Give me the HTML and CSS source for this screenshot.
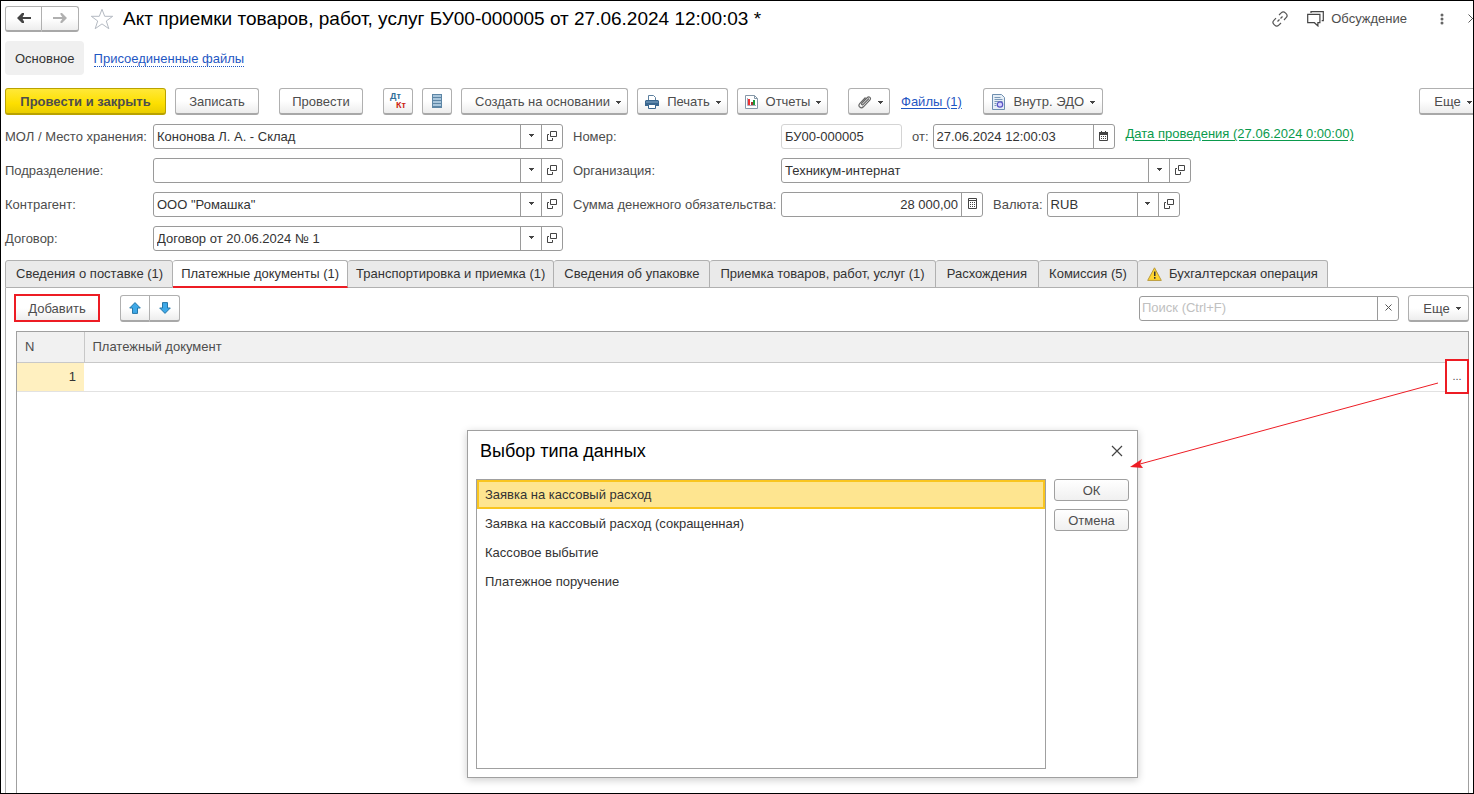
FILE: index.html
```
<!DOCTYPE html>
<html lang="ru">
<head>
<meta charset="utf-8">
<title>Акт приемки товаров, работ, услуг</title>
<link rel="stylesheet" href="styles.css">
</head>
<body>
<svg class="defs" width="0" height="0" aria-hidden="true">
  <symbol id="caret" viewBox="0 0 5 3"><path d="M0 0h5v1H4v1H3v1H2V2H1V1H0z" fill="#444"/></symbol>
  <symbol id="open" viewBox="0 0 10 10"><path d="M3.500.5h6v5h-6zM2 3.500H.5v6h5V7" fill="none" stroke="#444"/></symbol>
</svg>
<div class="app">
  <header class="titlebar">
    <div class="pair">
      <button class="btn" type="button" aria-label="Назад"><svg width="14" height="10" viewBox="0 0 14 10"><path d="M3 5h11" stroke="#444" stroke-width="2"/><path d="M0 5 5 0h2v1.500L5 5l2 3.500V10H5z" fill="#444"/></svg></button>
      <button class="btn" type="button" aria-label="Вперед"><svg width="14" height="10" viewBox="0 0 14 10"><path d="M0 5h11" stroke="#b0b0b0" stroke-width="2"/><path d="M14 5 9 0H7.500v1.500L10 5 7.500 8.500V10H9z" fill="#b0b0b0"/></svg></button>
    </div>
    <button class="plain star" type="button" aria-label="В избранное"><svg width="24" height="22" viewBox="0 0 24 22"><path d="M12 1.300l2.700 7h8l-6.400 4.700 2.500 7.700-6.800-4.800-6.800 4.800 2.500-7.700L1.300 8.300h8z" fill="#fff" stroke="#b4bac2"/></svg></button>
    <h1>Акт приемки товаров, работ, услуг БУ00-000005 от 27.06.2024 12:00:03 *</h1>
    <button class="plain link-icon" type="button" aria-label="Получить ссылку"><svg width="16" height="16" viewBox="0 0 16 16" fill="none" stroke="#555" stroke-width="1.200"><path d="M7 4l2.200-2.200a2.900 2.900 0 0 1 4.100 0l.8.800a2.900 2.900 0 0 1 0 4.100L12 9M9 12l-2.200 2.200a2.900 2.900 0 0 1-4.100 0l-.8-.8a2.900 2.900 0 0 1 0-4.100L4 7.200M5.500 10.500l2-2M8.500 7.500l2-2"/></svg></button>
    <button class="plain talk" type="button"><svg width="17" height="16" viewBox="0 0 17 16" fill="none" stroke="#444" stroke-width="1.200"><path d="M4 2V.6h12.300v9h-1.600M.7 3.300h12.200v8.400h-2v3.200l-3.500-3.200H.7z"/></svg>Обсуждение</button>
    <button class="plain dots" type="button" aria-label="Меню"><svg width="4" height="12" viewBox="0 0 4 12" fill="#666"><circle cx="2" cy="2" r="1.500"/><circle cx="2" cy="6" r="1.500"/><circle cx="2" cy="10" r="1.500"/></svg></button>
    <button class="plain shut" type="button" aria-label="Закрыть"><svg width="9" height="9" viewBox="0 0 9 9"><path d="M.5.500l8 8M8.500.500l-8 8" stroke="#555"/></svg></button>
  </header>

  <nav class="sections">
    <a class="current" href="#main">Основное</a>
    <a class="attached" href="#attached">Присоединенные файлы</a>
  </nav>

  <div class="toolbar">
    <button class="btn primary" type="button">Провести и закрыть</button>
    <button class="btn post gap-s" type="button">Записать</button>
    <button class="btn post gap-l" type="button">Провести</button>
    <button class="btn icon gap-l" type="button" aria-label="Дебет Кредит"><span class="dk"><b>Дт</b><b class="kt">Кт</b></span></button>
    <button class="btn icon gap-s" type="button" aria-label="Реестр"><svg width="10" height="14" viewBox="0 0 10 14"><path d="M0 0h10v14H0z" fill="#5d86a6"/><path d="M1 1h8v2H1zM1 4h8v2H1zM1 7h8v2H1zM1 10h8v2H1z" fill="#a9c6dc"/></svg></button>
    <button class="btn create gap-s" type="button">Создать на основании<svg class="caret"><use href="#caret"/></svg></button>
    <button class="btn lead w-print gap-s" type="button"><svg width="14" height="14" viewBox="0 0 14 14"><path d="M3.500 6V.5h5l2 2V6" fill="#fff" stroke="#5c7f9e"/><path d="M0 6l1-1h12l1 1v5H0z" fill="#3a678f"/><path d="M1 7h12" stroke="#86abc9"/><path d="M3.500 9.500h7v4h-7z" fill="#fff" stroke="#3a678f"/></svg>Печать<svg class="caret"><use href="#caret"/></svg></button>
    <button class="btn lead w-print gap-s" type="button"><svg width="13" height="14" viewBox="0 0 13 14"><path d="M.5.500h9l3 3v10H.5z" fill="#fff" stroke="#8598a8"/><path d="M9.500.500v3h3" fill="none" stroke="#8598a8"/><path d="M2.500 3v7.500H11" fill="none" stroke="#aab"/><path d="M3 4h2v6H3z" fill="#e33"/><path d="M6 7h2v3H6z" fill="#a33"/><path d="M8 5h2v5H8z" fill="#1a9c3b"/></svg>Отчеты<svg class="caret"><use href="#caret"/></svg></button>
    <button class="btn clip gap-l" type="button" aria-label="Вложения"><svg width="14" height="14" viewBox="0 0 14 14"><path d="M11 3.500 5 9.600c-.8.800-2-.3-1.200-1.200l5.600-5.900c1.700-1.700 4.200.5 2.600 2.300l-6.600 7c-2.500 2.400-5.900-.6-3.700-3.200L7.500 2.500" fill="none" stroke="#666" stroke-width="1.200"/></svg><svg class="caret"><use href="#caret"/></svg></button>
    <a class="files" href="#files">Файлы (1)</a>
    <button class="btn lead edo" type="button"><svg width="14" height="16" viewBox="0 0 14 16"><path d="M.5.500h9l3 3v12H.5z" fill="#e6eef6" stroke="#6f8fb0"/><path d="M2.500 3.500h6M2.500 5.500h8M2.500 7.500h8M2.500 9.500h2M2.500 11.500h2" stroke="#7a98b8"/><circle cx="8" cy="10.500" r="2.700" fill="#d8d5ff" stroke="#5a55c4" stroke-width="1.200"/></svg>Внутр. ЭДО<svg class="caret"><use href="#caret"/></svg></button>
    <button class="btn etc more" type="button">Еще<svg class="caret"><use href="#caret"/></svg></button>
  </div>

  <form class="form">
    <div class="fields left">
      <label for="mol">МОЛ / Место хранения:</label>
      <div class="field"><input id="mol" value="Кононова Л. А. - Склад"><button type="button" aria-label="Выбрать"><svg class="caret"><use href="#caret"/></svg></button><button type="button" aria-label="Открыть"><svg class="open"><use href="#open"/></svg></button></div>
      <label for="dep">Подразделение:</label>
      <div class="field"><input id="dep" value=""><button type="button" aria-label="Выбрать"><svg class="caret"><use href="#caret"/></svg></button><button type="button" aria-label="Открыть"><svg class="open"><use href="#open"/></svg></button></div>
      <label for="agent">Контрагент:</label>
      <div class="field"><input id="agent" value='ООО "Ромашка"'><button type="button" aria-label="Выбрать"><svg class="caret"><use href="#caret"/></svg></button><button type="button" aria-label="Открыть"><svg class="open"><use href="#open"/></svg></button></div>
      <label for="contract">Договор:</label>
      <div class="field"><input id="contract" value="Договор от 20.06.2024 № 1"><button type="button" aria-label="Выбрать"><svg class="caret"><use href="#caret"/></svg></button><button type="button" aria-label="Открыть"><svg class="open"><use href="#open"/></svg></button></div>
    </div>
    <div class="fields right">
      <label for="num">Номер:</label>
      <div class="line">
        <div class="field readonly w-num"><input id="num" value="БУ00-000005" readonly></div>
        <label class="inner" for="date">от:</label>
        <div class="field w-date"><input id="date" value="27.06.2024 12:00:03"><button type="button" aria-label="Календарь"><svg width="9" height="10" viewBox="0 0 9 10"><path d="M.5 2h8v7.500h-8z" fill="#fff" stroke="#444"/><path d="M0 1h9v3H0zM2 0h1v2H2zM6 0h1v2H6z" fill="#444"/><path d="M2 5.500h5M2 7.500h5" stroke="#444" stroke-dasharray="1 1"/></svg></button></div>
        <a class="posting" href="#posting">Дата проведения (27.06.2024 0:00:00)</a>
      </div>
      <label for="org">Организация:</label>
      <div class="field w-org"><input id="org" value="Техникум-интернат"><button type="button" aria-label="Выбрать"><svg class="caret"><use href="#caret"/></svg></button><button type="button" aria-label="Открыть"><svg class="open"><use href="#open"/></svg></button></div>
      <label for="sum">Сумма денежного обязательства:</label>
      <div class="line">
        <div class="field w-sum"><input id="sum" class="num" value="28 000,00"><button type="button" aria-label="Калькулятор"><svg width="9" height="11" viewBox="0 0 9 11"><path d="M.5.500h8v10h-8zM.5 2.500h8" fill="none" stroke="#444"/><path d="M2 4.500h5M2 6.500h5M2 8.500h5" stroke="#444" stroke-dasharray="1 1"/></svg></button></div>
        <label class="inner" for="cur">Валюта:</label>
        <div class="field w-cur"><input id="cur" value="RUB"><button type="button" aria-label="Выбрать"><svg class="caret"><use href="#caret"/></svg></button><button type="button" aria-label="Открыть"><svg class="open"><use href="#open"/></svg></button></div>
      </div>
    </div>
  </form>

  <div class="tabs" role="tablist">
    <button type="button" role="tab">Сведения о поставке (1)</button>
    <button type="button" role="tab" aria-selected="true" class="active tight">Платежные документы (1)</button>
    <button type="button" role="tab" class="tight">Транспортировка и приемка (1)</button>
    <button type="button" role="tab">Сведения об упаковке</button>
    <button type="button" role="tab">Приемка товаров, работ, услуг (1)</button>
    <button type="button" role="tab" class="loose">Расхождения</button>
    <button type="button" role="tab">Комиссия (5)</button>
    <button type="button" role="tab"><svg class="warn" width="15" height="14" viewBox="0 0 15 14"><path d="M7.500.800 14.300 13.400H.7z" fill="#ffd52e" stroke="#b99a3c" stroke-linejoin="round"/><path d="M7 4.500h1.500v4.500H7zM7 10h1.500v1.700H7z" fill="#333"/></svg>Бухгалтерская операция</button>
    <span class="rest"></span>
  </div>

  <main class="panel">
    <div class="commands">
      <button class="btn add" type="button">Добавить</button>
      <div class="pair">
        <button class="btn" type="button" aria-label="Вверх"><svg width="12" height="12" viewBox="0 0 12 12"><path d="M6 .6 11.300 6H8.500v5.400h-5V6H.7z" fill="#3fa9e8" stroke="#2677a8"/></svg></button>
        <button class="btn" type="button" aria-label="Вниз"><svg width="12" height="12" viewBox="0 0 12 12"><path d="M6 11.400.7 6h2.800V.6h5V6h2.800z" fill="#3fa9e8" stroke="#2677a8"/></svg></button>
      </div>
      <div class="field search"><input type="text" placeholder="Поиск (Ctrl+F)" aria-label="Поиск"><button type="button" aria-label="Очистить"><svg width="7" height="7" viewBox="0 0 7 7"><path d="M.5.500l6 6M6.500.500l-6 6" stroke="#555"/></svg></button></div>
      <button class="btn etc more-list" type="button">Еще<svg class="caret"><use href="#caret"/></svg></button>
    </div>
    <div class="grid">
      <table>
        <thead><tr><th class="col-n">N</th><th>Платежный документ</th></tr></thead>
        <tbody><tr><td class="col-n">1</td><td class="doc"><button class="pick" type="button" aria-label="Выбрать">...</button></td></tr></tbody>
      </table>
    </div>
  </main>

  <section class="dialog" role="dialog" aria-labelledby="dlg-title">
    <div class="dialog-head">
      <h2 id="dlg-title">Выбор типа данных</h2>
      <button class="plain" type="button" aria-label="Закрыть"><svg width="12" height="12" viewBox="0 0 12 12"><path d="M1 1l10 10M11 1 1 11" stroke="#444" stroke-width="1.200"/></svg></button>
    </div>
    <div class="dialog-body">
      <ul role="listbox" aria-labelledby="dlg-title">
        <li role="option" aria-selected="true">Заявка на кассовый расход</li>
        <li role="option">Заявка на кассовый расход (сокращенная)</li>
        <li role="option">Кассовое выбытие</li>
        <li role="option">Платежное поручение</li>
      </ul>
      <div class="dialog-actions">
        <button type="button">ОК</button>
        <button type="button">Отмена</button>
      </div>
    </div>
  </section>
  <svg class="arrow" width="310" height="90" viewBox="0 0 310 90" aria-hidden="true"><path d="M308 2 10 83" stroke="#ed1c24" fill="none"/><path d="M0 86l12-8-2 5 3 4z" fill="#ed1c24"/></svg>
</div>
</body>
</html>
```
FILE: styles.css
```
* { box-sizing: border-box; }
body {
  margin: 0;
  background: #fff;
  color: #4d4d4d;
  font: 13px/16px "Liberation Sans", Arial, sans-serif;
}
button, input { font: inherit; color: inherit; }
button { padding: 0; white-space: nowrap; }
svg { display: block; flex: none; }
.defs { position: absolute; }
.caret { width: 5px; height: 3px; }
.open { width: 10px; height: 10px; }

.app {
  position: relative;
  display: flex;
  flex-direction: column;
  min-height: 100vh;
  padding-left: 4px;
  border: 1px solid #000;
  overflow: hidden;
}

.plain {
  display: flex;
  align-items: center;
  border: 0;
  background: none;
}
.btn {
  display: flex;
  align-items: center;
  justify-content: center;
  flex: none;
  height: 27px;
  padding: 2px 13px 0;
  border: 1px solid #b0b0b0;
  border-bottom: 2px solid #a8a8a8;
  border-radius: 3px;
  background: linear-gradient(#fff 50%, #ededed);
}
.btn .caret { margin-left: 6px; margin-right: -7px; }
.pair { display: flex; }
.pair .btn:first-child { border-radius: 3px 0 0 3px; }
.pair .btn:last-child { border-left: 0; border-radius: 0 3px 3px 0; }

.titlebar {
  display: flex;
  align-items: center;
  height: 35px;
  margin-right: -4px;
}
.titlebar .pair .btn { width: 37px; height: 26px; padding: 0; }
.star { margin-left: 11px; }
h1, h2 { margin: 0; color: #000; line-height: 22px; font-weight: 400; }
h1 { flex: 1; margin-left: 9px; font-size: 19px; white-space: nowrap; }
h2 { font-size: 18px; }
.link-icon { margin-right: 19px; }
.talk { gap: 7px; margin-right: 33px; }
.dots { margin-right: 24px; }

.sections { display: flex; gap: 10px; height: 34px; margin-top: 5px; align-items: center; }
.current {
  padding: 10px 9px 8px 10px;
  border-radius: 4px;
  background: #f0f0f0;
  color: #333;
  text-decoration: none;
}
.attached {
  margin-top: 2px;
  color: #1f57c3;
  line-height: 14px;
  text-decoration: none;
  border-bottom: 1px dotted #1f57c3;
}

.toolbar { display: flex; align-items: center; margin: 13px -7px 0 0; }
.primary {
  width: 161px;
  border-color: #b9a200;
  background: linear-gradient(#ffe838, #fddf00 60%, #e9cd00);
  font-weight: 700;
}
.post { width: 84px; }
.create { width: 167px; }
.gap-s { margin-left: 9px; }
.gap-l { margin-left: 20px; }
.icon { width: 30px; padding: 0; }
.dk { display: flex; flex-direction: column; font-size: 9px; line-height: 9px; color: #2f6d98; text-align: left; }
.kt { color: #c21; padding-left: 6px; }
.lead { padding-left: 7px; }
.lead svg:first-child { margin-right: 8px; }
.w-print { width: 91px; }
.clip { width: 42px; padding-left: 8px; }
.files { margin: 0 21px 0 11px; color: #1f57c3; text-underline-offset: 2px; }
.edo { width: 120px; }
.etc { width: 61px; }
.more { margin-left: auto; }

.form { display: flex; gap: 10px; margin-top: 9px; }
.fields { display: grid; grid-auto-rows: 25px; row-gap: 9px; align-items: center; align-content: start; white-space: nowrap; }
.left { grid-template-columns: 148px 410px; }
.right { grid-template-columns: 208px auto; }
.line { display: flex; align-items: center; }
.inner { margin-left: 10px; margin-right: 4px; }
.field {
  display: flex;
  height: 25px;
  border: 1px solid #9a9a9a;
  border-radius: 3px;
  background: #fff;
  overflow: hidden;
}
.field input {
  flex: 1;
  min-width: 0;
  padding: 0 3px;
  border: 0;
  background: none;
  outline: 0;
  color: #333;
}
.field .num { text-align: right; }
.field button {
  display: flex;
  align-items: center;
  justify-content: center;
  flex: none;
  width: 21px;
  padding-bottom: 2px;
  border: 0;
  border-left: 1px solid #9a9a9a;
  background: none;
}
.readonly { border-color: #d4d4d4; }
.w-num { width: 121px; }
.w-date { width: 182px; }
.w-org { width: 410px; }
.w-sum { width: 202px; }
.w-cur { width: 133px; }
.posting { align-self: flex-start; margin-left: 11px; color: #0a9a4c; line-height: 20px; text-underline-offset: 2px; }

.tabs { display: flex; margin-top: 9px; }
.tabs button {
  display: flex;
  align-items: center;
  height: 28px;
  padding: 0 10px;
  border: 1px solid #b0b0b0;
  border-left-width: 0;
  border-radius: 3px 3px 0 0;
  background: #eaeaea;
  color: #333;
}
.tabs button:first-child { padding: 0 9px 0 10px; border-left-width: 1px; }
.tabs .tight { padding: 0 8px; }
.tabs .loose { padding: 0 11px; }
.tabs .active { border-bottom: 2px solid #ed1c24; background: #fff; }
.tabs button:nth-last-child(2) { padding: 0 9px; }
.warn { margin-right: 7px; }
.rest { flex: 1; border-bottom: 1px solid #b0b0b0; }

.panel {
  display: flex;
  flex: 1;
  flex-direction: column;
  padding: 6px 4px 0 8px;
  border-left: 1px solid #b0b0b0;
}
.commands { display: flex; align-items: center; }
.add { width: 86px; height: 28px; border: 2px solid #ed1c24; border-radius: 0; }
.commands .pair { margin-left: 20px; }
.commands .pair .btn { width: 30px; padding: 0; }
.search { width: 260px; margin-left: auto; }
.search input { padding: 0 2px; }
.search input::placeholder { color: #c0c0c0; opacity: 1; }
.more-list { margin-left: 9px; }
.grid { flex: 1; margin: 9px 0 0 2px; border: 1px solid #a0a0a0; border-bottom: 0; }
table { width: 100%; border-collapse: collapse; table-layout: fixed; }
th {
  height: 30px;
  padding: 0 8px;
  border-bottom: 1px solid #c8c8c8;
  background: #f1f1f1;
  font-weight: 400;
  text-align: left;
}
th.col-n { width: 67px; border-right: 1px solid #c8c8c8; }
td { height: 29px; padding: 0; border-bottom: 1px solid #e2e2e2; }
td.col-n { padding-right: 8px; background: #fff0c0; color: #333; text-align: right; }
.doc { position: relative; }
.pick {
  position: absolute;
  top: -4px;
  right: -1px;
  width: 24px;
  height: 35px;
  border: 2px solid #ed1c24;
  background: #fff;
  font-size: 11px;
}

.dialog {
  position: absolute;
  left: 466px;
  top: 429px;
  width: 671px;
  padding: 0 8px 8px;
  border: 1px solid #a0a0a0;
  background: #fff;
  box-shadow: 0 2px 8px rgba(0, 0, 0, .2);
}
.dialog-head { display: flex; align-items: center; justify-content: space-between; height: 48px; padding: 0 6px 8px 4px; }
.dialog-body { display: flex; gap: 8px; }
ul { flex: 1; height: 290px; margin: 0; padding: 0; border: 1px solid #a0a0a0; list-style: none; color: #333; }
li { height: 29px; padding: 0 8px; line-height: 29px; }
li[aria-selected] { padding: 0 6px; border: 2px solid #f9c51f; background: #fee590; line-height: 26px; }
.dialog-actions { display: flex; flex-direction: column; gap: 8px; }
.dialog-actions button {
  width: 75px;
  height: 22px;
  padding-top: 1px;
  border: 1px solid #a0a0a0;
  border-radius: 3px;
  background: linear-gradient(#fff, #f0f0f0);
}
.arrow { position: absolute; left: 1129px; top: 380px; pointer-events: none; }
```
